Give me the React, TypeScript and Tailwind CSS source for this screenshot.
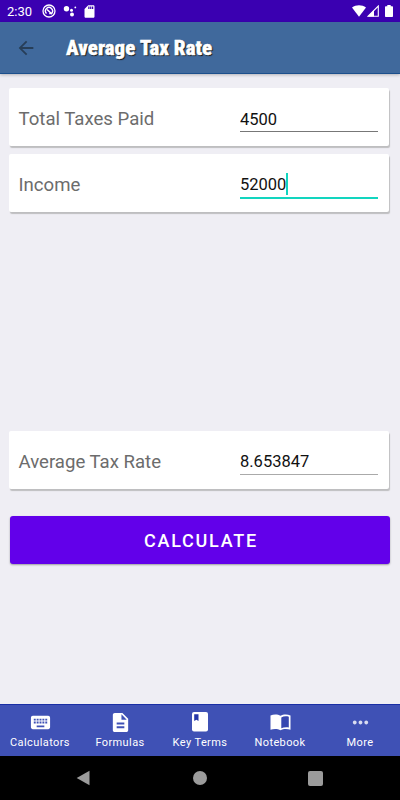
import { useState, type ReactNode } from 'react';
import { MdArrowBack, MdDescription, MdKeyboard, MdMoreHoriz, MdSdCard } from 'react-icons/md';

const TABS = [
  { label: 'Calculators', icon: <MdKeyboard className="size-[23px]" /> },
  { label: 'Formulas', icon: <MdDescription className="size-[23px]" /> },
  { label: 'Key Terms', icon: <BookIcon /> },
  { label: 'Notebook', icon: <NotebookIcon /> },
  { label: 'More', icon: <MdMoreHoriz className="size-[23px] text-white/80" /> },
];

export default function App() {
  const [taxes, setTaxes] = useState('4500');
  const [rate, setRate] = useState('8.653847');
  const income = '52000';

  const calculate = () => setRate(((Number(taxes) / Number(income)) * 100).toFixed(6));

  return (
    <div className="flex h-[800px] w-[400px] flex-col overflow-hidden bg-[#efeef4] font-['Roboto',sans-serif]">
      <StatusBar />

      <header className="flex h-[52px] shrink-0 items-center border-b border-[#1c4f8c] bg-[#40699c] pl-[15px] shadow-[0_1px_3px_rgba(0,0,0,0.25)]">
        <button aria-label="Back">
          <MdArrowBack className="size-[22px] text-[#273e58]" />
        </button>
        <h1 className="ml-[29px] whitespace-nowrap pt-[2px] text-[21px] font-black text-white [-webkit-text-stroke:0.3px_white] [font-stretch:75%] [text-shadow:1px_1px_1px_#111]">
          Average Tax Rate
        </h1>
      </header>

      <main className="flex flex-1 flex-col pt-[14px] pr-[11px] pl-[9px]">
        <Card label="Total Taxes Paid">
          <input
            value={taxes}
            onChange={(e) => setTaxes(e.target.value)}
            className="h-[30px] w-[138px] border-b border-[#777] pt-[5px] text-[16.5px] text-[#111] outline-none"
          />
        </Card>
        <div className="h-[8px]" />
        <Card label="Income">
          <div className="flex h-[31px] w-[138px] items-center border-b-2 border-[#12d5bf] pt-[5px] text-[16.5px] text-[#111]">
            {income}
            <span className="-mt-[3px] h-[22px] w-[2px] bg-[#12d5bf]" />
          </div>
        </Card>

        <div className="h-[219px]" />
        <Card label="Average Tax Rate">
          <div className="flex h-[30px] w-[138px] items-center border-b border-[#aaa] pt-[5px] text-[16.5px] text-[#111]">{rate}</div>
        </Card>

        <button
          onClick={calculate}
          className="mt-[27px] -mr-px ml-px h-[48px] rounded-[3px] bg-[#6200ea] pl-[2px] text-[18px] font-medium tracking-[1.75px] text-white shadow-[0_1px_2px_rgba(0,0,0,0.35)]"
        >
          CALCULATE
        </button>
      </main>

      <nav className="grid h-[52px] shrink-0 grid-cols-5 border-t border-[#1a2fa5] bg-[#3f51b5] text-white">
        {TABS.map((tab) => (
          <button key={tab.label} className="flex flex-col items-center pt-[5px]">
            <span className="flex h-6 items-center">{tab.icon}</span>
            <span className="mt-[2px] text-[11px] leading-[14px] tracking-[0.4px] whitespace-nowrap">{tab.label}</span>
          </button>
        ))}
      </nav>

      <div className="flex h-11 shrink-0 items-center bg-black pl-[76px] text-[#9b9b9b]">
        <svg className="h-4 w-[14px]" viewBox="0 0 14 16" fill="currentColor">
          <path d="M13.5.7v14.6L.7 8z" />
        </svg>
        <span className="ml-[103px] size-[14px] rounded-full bg-current" />
        <span className="ml-[101px] size-[15px] rounded-[2px] bg-current" />
      </div>
    </div>
  );
}

function StatusBar() {
  return (
    <div className="flex h-[22px] shrink-0 items-center bg-[#3a00b1] pl-[7px] text-white">
      <span className="w-[26px] text-[13px] leading-none">2:30</span>
      <svg className="ml-[9px] size-[14px]" viewBox="0 0 14 14" fill="none" stroke="currentColor">
        <circle cx="7" cy="7" r="6" strokeWidth="1.3" />
        <path d="M4.5 9.5A3.5 3.5 0 1 1 9.5 9.5H7.2" strokeWidth="1.4" />
        <path d="M5 5.5l5 4.5" strokeWidth="1.5" />
      </svg>
      <svg className="ml-[7px] h-3 w-[14px]" viewBox="0 0 14 12" fill="currentColor">
        <circle cx="3.5" cy="3.8" r="2.7" />
        <circle cx="8.5" cy="5.3" r="1.5" />
        <circle cx="9" cy="9.4" r="2" />
        <circle cx="12.3" cy="2.4" r="0.9" />
      </svg>
      <MdSdCard className="ml-[5px] size-[15px]" />
      <svg className="ml-auto h-3 w-[14px]" viewBox="0 0 14 12" fill="currentColor">
        <path d="M0 2.6C4-.6 10-.6 14 2.6L7 11.7z" />
      </svg>
      <svg className="ml-px h-3 w-3" viewBox="0 0 12 12">
        <path d="M11.3 1v10.3H1z" fill="none" stroke="currentColor" strokeWidth="1.1" />
        <path d="M1 11.5L7 5v6.5z" fill="currentColor" />
      </svg>
      <svg className="mr-[7px] ml-[6px] h-3 w-2" viewBox="0 0 8 12" fill="currentColor">
        <path d="M2.3 0h3.4v1.2H7c.6 0 1 .4 1 1V11c0 .6-.4 1-1 1H1c-.6 0-1-.4-1-1V2.2c0-.6.4-1 1-1h1.3z" />
      </svg>
    </div>
  );
}

function Card({ label, children }: { label: string; children: ReactNode }) {
  return (
    <section className="flex h-[58px] items-start rounded-[2px] bg-white pt-[14px] pl-[9.5px] shadow-[1px_2px_1px_#bebec0]">
      <label className="w-[221.5px] pt-px text-[18.6px] leading-8 text-[#6c6c6c]">{label}</label>
      {children}
    </section>
  );
}

function BookIcon() {
  return (
    <svg className="h-5 w-4" viewBox="0 0 16 20">
      <rect width="16" height="19.4" rx="2" fill="currentColor" />
      <path d="M2.2 2.2h4.3v6.8L4.4 7.7 2.2 9z" fill="#2637a8" />
    </svg>
  );
}

function NotebookIcon() {
  return (
    <svg className="h-[17px] w-[21px]" viewBox="0 0 21 17">
      <path d="M10.5 1.8C7.8.1 3.5.1.5 1.5v14.3c3-1.2 7.3-1.2 10 .5 2.7-1.7 7-1.7 10-.5V1.5C17.5.1 13.2.1 10.5 1.8z" fill="currentColor" />
      <path d="M11.3 3.4c2-1.1 4.7-1.4 7.5-.7v10.7c-2.8-.5-5.5-.1-7.5.9z" fill="#3646b0" />
    </svg>
  );
}
